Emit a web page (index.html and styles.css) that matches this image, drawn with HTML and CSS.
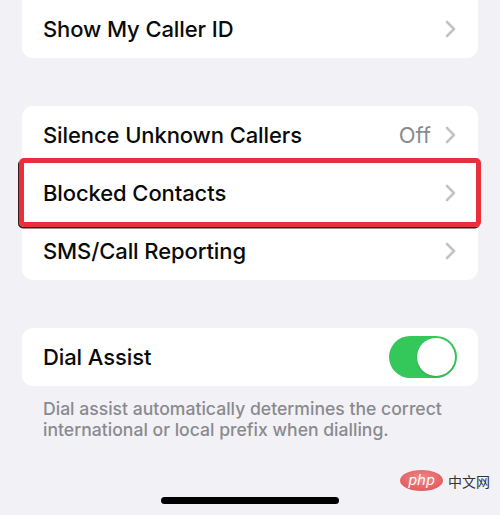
FILE: index.html
```html
<!DOCTYPE html>
<html>
<head>
<meta charset="utf-8">
<link rel="stylesheet" href="styles.css">
</head>
<body>
<div class="screen">
  <div class="card card-first">
    <div class="row">
      <span class="label">Show My Caller ID</span>
      <span class="chev"><svg width="11" height="18" viewBox="0 0 11 18"><path d="M2 2 L9 9 L2 16" fill="none" stroke="#c4c4c7" stroke-width="2.6" stroke-linecap="round" stroke-linejoin="round"/></svg></span>
    </div>
  </div>

  <div class="card">
    <div class="row">
      <span class="label">Silence Unknown Callers</span>
      <span class="value">Off</span>
      <span class="chev"><svg width="11" height="18" viewBox="0 0 11 18"><path d="M2 2 L9 9 L2 16" fill="none" stroke="#c4c4c7" stroke-width="2.6" stroke-linecap="round" stroke-linejoin="round"/></svg></span>
    </div>
    <div class="row highlighted">
      <span class="label">Blocked Contacts</span>
      <span class="chev"><svg width="11" height="18" viewBox="0 0 11 18"><path d="M2 2 L9 9 L2 16" fill="none" stroke="#c4c4c7" stroke-width="2.6" stroke-linecap="round" stroke-linejoin="round"/></svg></span>
      <span class="redbox"></span>
    </div>
    <div class="row">
      <span class="label">SMS/Call Reporting</span>
      <span class="chev"><svg width="11" height="18" viewBox="0 0 11 18"><path d="M2 2 L9 9 L2 16" fill="none" stroke="#c4c4c7" stroke-width="2.6" stroke-linecap="round" stroke-linejoin="round"/></svg></span>
    </div>
  </div>

  <div class="card">
    <div class="row">
      <span class="label">Dial Assist</span>
      <span class="toggle"><span class="knob"></span></span>
    </div>
  </div>
  <p class="footer">Dial assist automatically determines the correct international or local prefix when dialling.</p>

  <div class="bottom">
    <div class="home"></div>
    <div class="watermark">
      <svg width="43" height="21" viewBox="0 0 43 21">
        <defs>
          <radialGradient id="g" cx="50%" cy="40%" r="60%">
            <stop offset="0" stop-color="#f08a8a"/>
            <stop offset="1" stop-color="#e25a5c"/>
          </radialGradient>
        </defs>
        <ellipse cx="21.5" cy="10.5" rx="21.5" ry="10.5" fill="url(#g)"/>
        <text x="21.5" y="15" text-anchor="middle" font-family="DejaVu Sans, sans-serif" font-size="14" font-style="italic" fill="#fff">php</text>
      </svg>
      <span class="cn">中文网</span>
    </div>
  </div>
</div>
</body>
</html>
```
FILE: styles.css
```css
html, body {
  margin: 0;
  padding: 0;
  background: #f2f1f6;
}
body {
  font-family: Inter, "Noto Sans", "Liberation Sans", sans-serif;
  width: 500px;
  height: 515px;
  overflow: hidden;
}
.screen {
  padding: 0 22px;
  display: flex;
  flex-direction: column;
}
.card {
  background: #ffffff;
  border-radius: 11px;
  margin-top: 48px;
}
.card-first {
  margin-top: -20px;
  padding-top: 20px;
}
.row {
  position: relative;
  height: 58px;
  display: flex;
  align-items: center;
  padding: 0 22px 0 21px;
}
.label {
  flex: 1;
  font-size: 22px;
  font-weight: 500;
  color: #0a0a0a;
  letter-spacing: -0.1px;
}
.value {
  font-size: 22px;
  color: #8a8a8e;
  margin-right: 14px;
}
.chev {
  display: flex;
  align-items: center;
}
.redbox {
  position: absolute;
  left: -3px;
  right: -3px;
  top: -6px;
  bottom: -5px;
  border: 5px solid #e8303a;
  border-radius: 5px;
  box-shadow: -1px 1.5px 0 #3a1a1a;
}
.toggle {
  width: 68px;
  height: 42px;
  background: #34c759;
  border-radius: 21px;
  display: flex;
  align-items: center;
  justify-content: flex-end;
  padding: 0 2px;
  box-sizing: border-box;
  margin-right: -1px;
}
.knob {
  width: 38px;
  height: 38px;
  border-radius: 50%;
  background: #fff;
  box-shadow: 0 1px 2px rgba(0,0,0,0.15);
}
.footer {
  margin: 12px 0 0 21px;
  font-size: 17.6px;
  line-height: 21px;
  color: #8a8a8e;
  font-weight: 500;
  width: 430px;
}
.bottom {
  position: relative;
  margin-top: 57px;
  height: 17px;
}
.home {
  width: 178px;
  height: 7px;
  background: #000;
  border-radius: 4px;
  margin: 0 auto;
}
.watermark {
  position: absolute;
  right: -12px;
  top: -27px;
  display: flex;
  align-items: center;
  gap: 5px;
}
.cn {
  font-family: "Noto Sans CJK SC", sans-serif;
  font-size: 14px;
  line-height: 16px;
  color: #333;
}
```
